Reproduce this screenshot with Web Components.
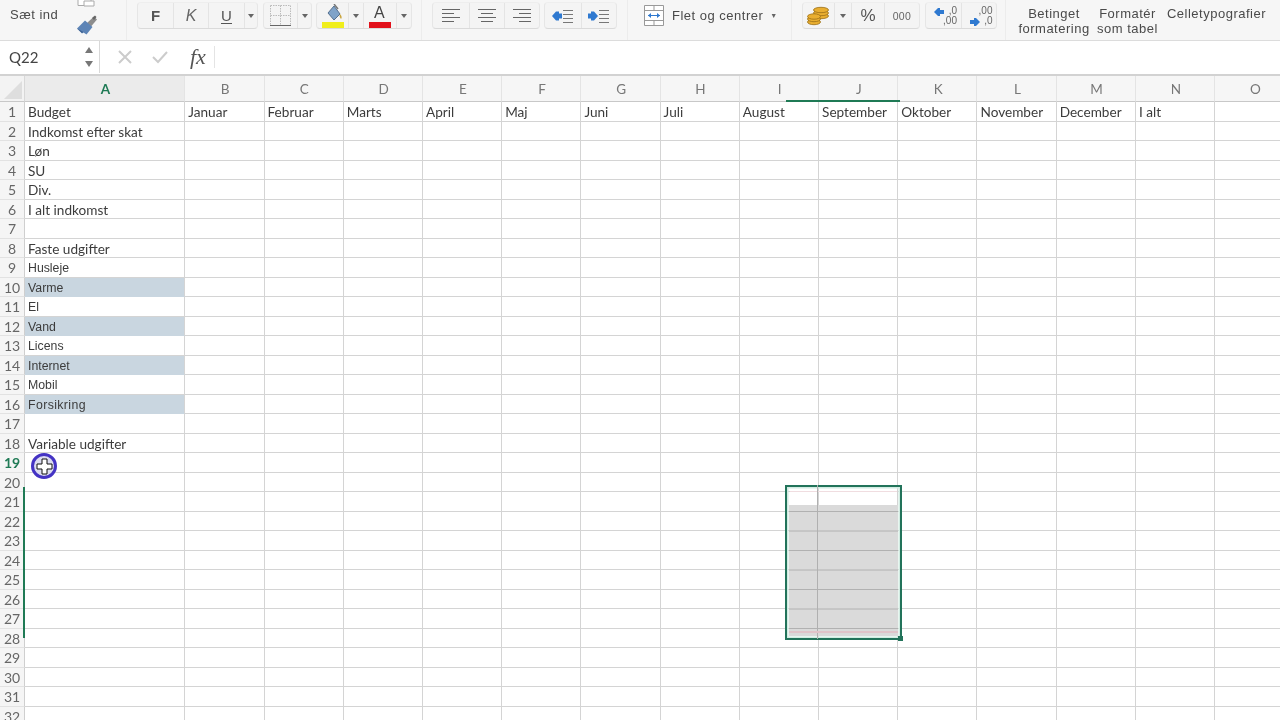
<!DOCTYPE html>
<html lang="da"><head><meta charset="utf-8"><title>Budget</title>
<style>
html,body{margin:0;padding:0;width:1280px;height:720px;overflow:hidden;background:#fff}
body{font-family:"Liberation Sans",sans-serif;color:#444;display:flex;flex-direction:column}
</style></head><body>
<x-ribbon>
  <x-plain w="76"><span style="padding-left:10px;font-size:13px;letter-spacing:.5px;color:#4a4a4a;margin-top:-11px">Sæt ind</span></x-plain>
  <x-plain w="50" style="display:block">
    <svg width="24" height="36" viewBox="0 0 24 36" style="display:block">
      <path d="M2 -6h13v11.500H2z" fill="#fff" stroke="#aaa"/><path d="M8 1h10v5H8z" fill="#fff" stroke="#aaa"/>
      <path d="M11 23l7-6.500 3 3-6 7z" fill="#8d8d8d"/><path d="M16 18l3-2.500 1.500 1.500-2.500 3z" fill="#666"/>
      <path d="M1 28.500l8-8 7.500 6.500-6 7.500-3-2-1.500 1z" fill="#5d84b6"/><path d="M1 28.500l6.500 3.500-1.500 1z" fill="#3f6293"/>
    </svg>
  </x-plain>
  <x-sep w="11"></x-sep>
  <x-group>
    <x-tool w="35"><b style="font-size:15px;color:#555">F</b></x-tool>
    <x-tool w="35"><i style="font-size:16px;color:#666">K</i></x-tool>
    <x-tool w="36"><span style="font-size:15px;color:#555;border-bottom:1.500px solid #555;line-height:15px">U</span></x-tool>
    <x-tool w="13" arrow></x-tool>
  </x-group>
  <x-group gap="7">
    <x-tool w="33"><svg width="21" height="21" viewBox="0 0 21 21"><path d="M.5.5h20M.5 10.500h20M10.500.5v20M.5.5v20M20.500.5v20" stroke="#bbb" stroke-dasharray="1.500 1" fill="none"/><path d="M0 20.500h21" stroke="#666"/></svg></x-tool>
    <x-tool w="14" arrow></x-tool>
  </x-group>
  <x-group gap="6">
    <x-tool w="31"><svg width="24" height="24" viewBox="0 0 24 24"><path d="M7 9l6-7 6 8-6 6z" fill="#7fa3c9" stroke="#55708f"/><path d="M13 0l4 5" stroke="#777" stroke-width="1.500"/><path d="M19 10c2 2 2 4 1 5-1-1-2-3-1-5z" fill="#c9a53f"/><path d="M1 18h22v6H1z" fill="#f0ee1c"/></svg></x-tool>
    <x-tool w="15" arrow></x-tool>
    <x-tool w="33"><svg width="24" height="24" viewBox="0 0 24 24"><path d="M1 18h22v6H1z" fill="#e2111b"/></svg><span style="position:absolute;left:10px;top:2px;font-size:16px;line-height:16px;color:#444">A</span></x-tool>
    <x-tool w="15" arrow></x-tool>
  </x-group>
  <x-sep w="22" left="11"></x-sep>
  <x-group>
    <x-tool w="36"><x-lines kind="l"></x-lines></x-tool>
    <x-tool w="35"><x-lines kind="c"></x-lines></x-tool>
    <x-tool w="35"><x-lines kind="r"></x-lines></x-tool>
  </x-group>
  <x-group gap="6">
    <x-tool w="36"><svg width="22" height="14" viewBox="0 0 22 14"><path d="M0 7l4-4.500h3v2h3v5H7v2H4z" fill="#2f79d0"/><path d="M11 1.500h10M11 5.500h10M11 9.500h10M11 13.500h10" stroke="#777"/></svg></x-tool>
    <x-tool w="35"><svg width="22" height="14" viewBox="0 0 22 14"><path d="M10 7L6 2.500H3v2H0v5h3v2h3z" fill="#2f79d0"/><path d="M11 1.500h10M11 5.500h10M11 9.500h10M11 13.500h10" stroke="#777"/></svg></x-tool>
  </x-group>
  <x-sep w="29" left="12"></x-sep>
  <x-plain w="147" style="margin-top:-5px">
    <svg width="20" height="21" viewBox="0 0 20 21" style="flex:none"><path d="M.5.5h19v20H.5zM.5 5.500h19M.5 15.500h19M10 .5v5M10 15.500v5" fill="#fff" stroke="#999"/><path d="M4 10.500h12" stroke="#2f79d0"/><path d="M7 8l-3 2.500L7 13zM13 8l3 2.500-3 2.500z" fill="#2f79d0"/></svg>
    <span style="margin-left:8px;font-size:13px;letter-spacing:.5px;color:#4a4a4a;white-space:nowrap">Flet og centrer</span>
    <span style="margin-left:7px;font-size:7px;color:#666">▼</span>
  </x-plain>
  <x-sep w="11"></x-sep>
  <x-group>
    <x-tool w="31"><svg width="24" height="22" viewBox="0 0 24 22"><g fill="#e9ae30" stroke="#9a6f16" stroke-width=".8"><ellipse cx="14" cy="11" rx="7.500" ry="2.700"/><ellipse cx="14" cy="8" rx="7.500" ry="2.700"/><ellipse cx="14" cy="5" rx="7.500" ry="2.700"/><ellipse cx="7" cy="17" rx="6.500" ry="2.700"/><ellipse cx="7" cy="14" rx="6.500" ry="2.700"/><ellipse cx="7" cy="11.500" rx="6.500" ry="2.700"/></g></svg></x-tool>
    <x-tool w="17" arrow></x-tool>
    <x-tool w="33"><span style="font-size:17px;color:#555">%</span></x-tool>
    <x-tool w="35"><span style="font-size:10.500px;color:#666;letter-spacing:.4px">000</span></x-tool>
  </x-group>
  <x-group gap="7">
    <x-tool w="35"><span style="font-size:10px;line-height:10px;color:#666;text-align:right;padding-left:13px;width:14px">,0<br>,00</span><svg width="12" height="10" viewBox="0 0 12 10" style="position:absolute;left:7px;top:4px"><path d="M1 5l4-4h2v2h4v4H7v2H5z" fill="#2f79d0"/></svg></x-tool>
    <x-tool w="35"><span style="font-size:10px;line-height:10px;color:#666;text-align:right;padding-left:13px;width:14px">,00<br>,0</span><svg width="12" height="10" viewBox="0 0 12 10" style="position:absolute;left:7px;top:14px"><path d="M11 5L7 1H5v2H1v4h4v2h2z" fill="#2f79d0"/></svg></x-tool>
  </x-group>
  <x-sep w="21" left="10"></x-sep>
  <x-label w="76">Betinget<br>formatering</x-label>
  <x-label w="71">Formatér<br>som tabel</x-label>
  <x-label w="107">Celletypografier</x-label>
</x-ribbon>
<x-formula name="Q22"></x-formula>
<x-sheet></x-sheet>

<template id="tg"><style>
:host{display:flex;margin-top:2px;margin-left:var(--gap,0);margin-right:-2px;flex:none;background:#f4f4f4;border:1px solid #e6e6e6;border-top-color:#eeeeee;border-bottom-color:#dadada;border-radius:4px;box-sizing:content-box;height:25px}
::slotted(*:not(:first-child)){border-left:1px solid #e4e4e4}
</style><slot></slot></template>

<script>
const tpl = id => document.getElementById(id).content.cloneNode(true);
class XRibbon extends HTMLElement{constructor(){super();this.attachShadow({mode:'open'}).innerHTML=`<style>
:host{display:flex;flex:none;align-items:flex-start;height:40px;background:#f6f6f6;border-bottom:1px solid #dcdcdc;box-sizing:content-box;overflow:hidden;filter:blur(.35px)}
</style><slot></slot>`}}
class XPlain extends HTMLElement{constructor(){super();this.attachShadow({mode:'open'}).innerHTML=`<style>
:host{display:flex;flex:none;height:40px;align-items:center;box-sizing:border-box}
</style><slot></slot>`}
connectedCallback(){this.style.width=this.getAttribute('w')+'px'}}
class XSep extends HTMLElement{constructor(){super();this.attachShadow({mode:'open'}).innerHTML=`<style>
:host{display:block;flex:none;height:40px}
</style>`}
connectedCallback(){this.style.width=this.getAttribute('w')+'px';const l=this.getAttribute('left')||0;this.style.background=`linear-gradient(#ececec,#ececec) ${l}px 0/1px 100% no-repeat`}}
class XGroup extends HTMLElement{constructor(){super();this.attachShadow({mode:'open'}).appendChild(tpl('tg'))}
connectedCallback(){this.style.setProperty('--gap',(this.getAttribute('gap')||0)+'px')}}
class XTool extends HTMLElement{constructor(){super();this.attachShadow({mode:'open'}).innerHTML=`<style>
:host{display:flex;position:relative;flex:none;align-items:center;justify-content:center;height:100%;box-sizing:border-box}
.a{width:0;height:0;border:3px solid transparent;border-top:4px solid #666;border-bottom:0}
</style><slot></slot>`}
connectedCallback(){this.style.width=this.getAttribute('w')+'px';if(this.hasAttribute('arrow')){const d=document.createElement('div');d.className='a';this.shadowRoot.appendChild(d)}}}
class XLines extends HTMLElement{constructor(){super();this.attachShadow({mode:'open'})}
connectedCallback(){const k=this.getAttribute('kind');const p=[[18,1],[12,5],[18,9],[12,13]].map(([w,y])=>{const x=k=='l'?0:k=='c'?(18-w)/2:18-w;return `M${x} ${y+.5}h${w}`}).join('');
this.shadowRoot.innerHTML=`<style>:host{display:block;width:18px;height:15px}svg{display:block}</style><svg width="18" height="15" viewBox="0 0 18 15"><path d="${p}" stroke="#666"/></svg>`}}
class XLabel extends HTMLElement{constructor(){super();this.attachShadow({mode:'open'}).innerHTML=`<style>
:host{display:block;flex:none;margin-top:7px;font-size:13px;line-height:14.500px;letter-spacing:.5px;text-align:center;color:#4a4a4a;white-space:nowrap}
</style><slot></slot>`}
connectedCallback(){this.style.width=this.getAttribute('w')+'px'}}
class XFormula extends HTMLElement{constructor(){super();this.attachShadow({mode:'open'}).innerHTML=`<style>
:host{display:flex;flex:none;height:32px;background:#fff;box-sizing:border-box;align-items:center;color:#555;filter:blur(.35px)}
.n{width:100px;height:100%;box-sizing:border-box;border-right:1px solid #d8d8d8;display:flex;align-items:center;justify-content:space-between;padding:0 6px 0 9px;font:15px Lato,sans-serif;color:#444}
.ar{display:flex;flex-direction:column;gap:8px}
.ar i{display:block;width:0;height:0;border:4px solid transparent}
.ar i:first-child{border-bottom:6px solid #777;border-top:0}.ar i:last-child{border-top:6px solid #777;border-bottom:0}
svg{display:block;flex:none}
.fx{font:italic 22px "Liberation Serif",serif;color:#555;margin-left:22px;padding-right:8px;border-right:1px solid #e4e4e4;line-height:22px}
</style>
<div class="n"><span>${this.getAttribute('name')}</span><span class="ar"><i></i><i></i></span></div>
<svg style="margin-left:18px" width="14" height="14" viewBox="0 0 14 14"><path d="M1 1l12 12M13 1L1 13" stroke="#ccc" stroke-width="2"/></svg>
<svg style="margin-left:20px" width="16" height="14" viewBox="0 0 16 14"><path d="M1 7l5 5L15 2" fill="none" stroke="#ccc" stroke-width="2"/></svg>
<span class="fx">fx</span>`}}
class XSheet extends HTMLElement{constructor(){super();
const W=79.23,cols='ABCDEFGHIJKLMNO'.split('');
const first=['Budget','Indkomst efter skat','Løn','SU','Div.','I alt indkomst','','Faste udgifter','Husleje','Varme','El','Vand','Licens','Internet','Mobil','Forsikring','','Variable udgifter'];
const months=['Januar','Februar','Marts','April','Maj','Juni','Juli','August','September','Oktober','November','December','I alt'];
let h='<div class="corner"><svg width="18" height="18" viewBox="0 0 18 18"><path d="M18 0v18H0z" fill="#dedede"/></svg></div>';
cols.forEach((c,i)=>h+=`<div class="ch${i==0?' on':''}">${c}</div>`);
for(let r=1;r<=32;r++){
 h+=`<div class="rh${r==19?' act':''}">${r}</div>`;
 const small=r>=9&&r<=16, fill=[10,12,14,16].includes(r);
 h+=`<div class="c a${fill?' fill':''}${small?' sm':''}"><span${r==16?' style="letter-spacing:.4px"':''}>${first[r-1]||''}</span></div>`;
 for(let i=0;i<14;i++){h+=`<div class="c">${r==1&&months[i]?`<span>${months[i]}</span>`:''}</div>`}
}
const root=this.attachShadow({mode:'open'});
root.innerHTML=`<style>
:host{display:block;position:relative;flex:1;min-height:0;overflow:hidden;border-top:2px solid #d2d2d2;margin-top:1px;background:#fff;filter:blur(.3px)}
.g{display:grid;grid-template-columns:25px 160.300px repeat(13,${W}px) 80px;grid-template-rows:26px repeat(32,19.500px);font:13.600px Lato,sans-serif;color:#3c3c3c}
.corner{background:#f3f3f3;border-right:1px solid #d8d8d8;border-bottom:1px solid #c8c8c8;display:flex;align-items:flex-end;justify-content:flex-end;padding:0 2px 2px 0;box-sizing:border-box}
.ch{background:#f6f6f6;border-right:1px solid #e4e4e4;border-bottom:1px solid #c8c8c8;display:flex;align-items:center;justify-content:center;color:#777;font-size:13.500px;box-sizing:border-box;padding-left:1.500px}
.ch.on{background:#ebebeb;color:#1f7a55;font-weight:700}
.rh{background:#f5f5f5;border-right:1px solid #cfcfcf;border-bottom:1px solid #e2e2e2;display:flex;align-items:center;justify-content:center;color:#666;font-size:14px;box-sizing:border-box;padding-top:1px}
.rh.act{color:#1f7a55;font-weight:700}
.c{border-right:1px solid #d4d4d4;border-bottom:1px solid #d4d4d4;box-sizing:border-box;padding:1.500px 0 0 3px;display:flex;align-items:center;white-space:nowrap;min-width:0}
.c span{display:block}
.a.sm{font:12.300px "Liberation Sans",sans-serif}
.a.fill{background:#c9d6e0;border-bottom-color:#c9d6e0}
.ul{position:absolute;left:786px;width:114px;top:24px;height:2px;background:#1f7a55}
.vl{position:absolute;left:23px;width:2px;top:411px;height:151px;background:#1f7a55}
.sel{position:absolute;left:785px;top:409px;width:117px;height:155px;box-sizing:border-box;border:2px solid #22735a;box-shadow:inset 0 0 0 1.500px #d2ece2}
.pk{position:absolute;left:3px;right:3px;top:4px;height:1px;background:#f0dde0}
.shade{position:absolute;left:2px;right:2px;top:18px;bottom:2px;background:linear-gradient(#dadada 0 18.500px,#b0b0b0 18.500px 19.500px) 0 -12.500px/100% 19.500px}
.shade::before{content:"";position:absolute;left:28px;top:-20px;bottom:-3px;width:1px;background:#b0b0b0}
.shade::after{content:"";position:absolute;left:0;right:0;bottom:3px;height:2px;background:#e0c4c9}
.h{position:absolute;right:-3px;bottom:-3px;width:5px;height:5px;background:#22735a}
.cur{position:absolute;left:31px;top:377px;width:26px;height:26px;box-sizing:border-box;border:3px solid #4433c4;border-radius:50%;background:#dcdcf0;display:flex;align-items:center;justify-content:center}
</style><div class="g">${h}</div>
<div class="ul"></div><div class="vl"></div>
<div class="sel"><div class="pk"></div><div class="shade"></div><div class="h"></div></div>
<div class="cur"><svg width="17" height="17" viewBox="0 0 17 17"><path d="M6 1h5v5h5v5h-5v5H6v-5H1V6h5z" fill="#fff" stroke="#111"/></svg></div>`}}
customElements.define('x-ribbon',XRibbon);customElements.define('x-plain',XPlain);customElements.define('x-sep',XSep);
customElements.define('x-group',XGroup);customElements.define('x-tool',XTool);customElements.define('x-lines',XLines);
customElements.define('x-label',XLabel);customElements.define('x-formula',XFormula);customElements.define('x-sheet',XSheet);
</script>
</body></html>
